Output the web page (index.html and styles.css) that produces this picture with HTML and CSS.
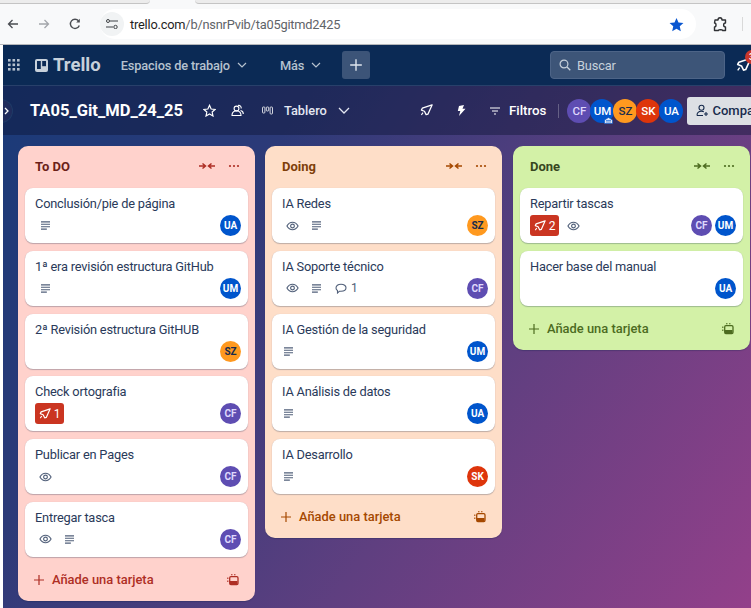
FILE: index.html
```html
<!DOCTYPE html>
<html lang="es">
<head>
<meta charset="utf-8">
<title>TA05_Git_MD_24_25 | Trello</title>
<link rel="stylesheet" href="styles.css">
</head>
<body>
<svg class="defs" width="0" height="0" aria-hidden="true">
  <symbol id="i-desc" viewBox="0 0 12 10"><path d="M1 1h10M1 3.700h10M1 6.300h10M1 9h6.500" fill="none" stroke="currentColor" stroke-width="1.200"/></symbol>
  <symbol id="i-eye" viewBox="0 0 14 10"><path d="M1 5c1.500-2.600 3.500-4 6-4s4.500 1.400 6 4c-1.500 2.600-3.500 4-6 4S2.500 7.600 1 5z" fill="none" stroke="currentColor" stroke-width="1.200"/><circle cx="7" cy="5" r="2" fill="none" stroke="currentColor" stroke-width="1.200"/></symbol>
  <symbol id="i-collapse" viewBox="0 0 16 8"><path d="M0 4h6M3.500 1.500 6.500 4 3.500 6.500M16 4h-6M12.500 1.500 9.500 4l3 2.500" fill="none" stroke="currentColor" stroke-width="1.500"/></symbol>
  <symbol id="i-dots" viewBox="0 0 12 4"><circle cx="2" cy="2" r="1.100" fill="currentColor"/><circle cx="6" cy="2" r="1.100" fill="currentColor"/><circle cx="10" cy="2" r="1.100" fill="currentColor"/></symbol>
  <symbol id="i-plus" viewBox="0 0 12 12"><path d="M6 1v10M1 6h10" fill="none" stroke="currentColor" stroke-width="1.200"/></symbol>
  <symbol id="i-tpl" viewBox="0 0 12 12"><rect x="2.700" y="2.700" width="8.300" height="7.800" rx="1.200" fill="none" stroke="currentColor" stroke-width="1.300"/><path d="M3 7h7.500v3.500H3z" fill="currentColor"/><path d="M.8 3.500v1.500M.8 6.500v1.500M4 .8h1.500M7 .8h1.500" fill="none" stroke="currentColor" stroke-width="1.100"/></symbol>
  <symbol id="i-pin" viewBox="0 0 14 14"><path d="M13 1 2.500 4.500 1.500 6.500 4.800 7.800 6.600 11.500 8.500 11z" fill="none" stroke="currentColor" stroke-width="1.400" stroke-linejoin="round"/><path d="M3.200 9.300 1.500 11.800" stroke="currentColor" stroke-width="1.200"/></symbol>
</svg>

<div class="tabstrip"><span class="tab-side left"></span><span class="tab-gap"></span><span class="tab-side right"></span></div>
<div class="toolbar">
  <svg class="tb-icon" width="12" height="12" viewBox="0 0 12 12"><path d="M11 6H1.500M5.500 2 1.500 6l4 4" fill="none" stroke="#4a4d52" stroke-width="1.300"/></svg>
  <svg class="tb-icon" width="12" height="12" viewBox="0 0 12 12"><path d="M1 6h9.500M6.500 2l4 4-4 4" fill="none" stroke="#a3a6aa" stroke-width="1.300"/></svg>
  <svg class="tb-icon" width="12" height="12" viewBox="0 0 12 12"><path d="M10.300 7.500A4.600 4.600 0 1 1 9.500 2.800" fill="none" stroke="#4a4d52" stroke-width="1.400"/><path d="M10.800 .8v3.600H7.200z" fill="#4a4d52"/></svg>
  <div class="omnibox">
    <span class="site-chip"><svg width="12" height="10" viewBox="0 0 12 10"><path d="M4 2h8M0 8h7" stroke="#3f4246" stroke-width="1.200" fill="none"/><circle cx="2" cy="2" r="1.500" fill="none" stroke="#3f4246"/><circle cx="9.500" cy="8" r="1.700" fill="none" stroke="#3f4246"/></svg></span>
    <span class="url"><b>trello.com</b>/b/nsnrPvib/ta05gitmd2425</span>
    <svg class="star" width="15" height="15" viewBox="0 0 24 24"><path d="M12 1.500l3.200 7.300 7.900.8-5.900 5.300 1.700 7.800L12 18.700l-6.900 4 1.700-7.800L.9 9.600l7.900-.8z" fill="#0b57d0"/></svg>
  </div>
  <svg class="ext" width="16" height="16" viewBox="0 0 16 16"><path d="M3 4h3c0-3 4-3 4 0h3.500v3c-2.500 0-2.500 4 0 4v3.500h-3c0-1-4-1-4 0H2.500V11c2 0 2-4 0-4z" fill="none" stroke="#2f3134" stroke-width="1.400" stroke-linejoin="round"/></svg>
  <span class="tb-sep"></span>
</div>

<div class="app">
  <header class="nav">
    <svg class="grid-ic" width="12" height="12" viewBox="0 0 12 12"><g fill="#b6c2cf"><rect x="0" y="0" width="2.600" height="2.600"/><rect x="4.500" y="0" width="2.600" height="2.600"/><rect x="9" y="0" width="2.600" height="2.600"/><rect x="0" y="4.500" width="2.600" height="2.600"/><rect x="4.500" y="4.500" width="2.600" height="2.600"/><rect x="9" y="4.500" width="2.600" height="2.600"/><rect x="0" y="9" width="2.600" height="2.600"/><rect x="4.500" y="9" width="2.600" height="2.600"/><rect x="9" y="9" width="2.600" height="2.600"/></g></svg>
    <span class="logo"><svg width="13" height="13" viewBox="0 0 13 13"><rect width="13" height="13" rx="2" fill="#c7d1db"/><rect x="2" y="2" width="3.800" height="8" fill="#0b2a55"/><rect x="7.200" y="2" width="3.800" height="5.200" fill="#0b2a55"/></svg>Trello</span>
    <span class="nav-item first">Espacios de trabajo <svg class="chev" width="10" height="6" viewBox="0 0 10 6"><path d="M1 1l4 4 4-4" fill="none" stroke="currentColor" stroke-width="1.200"/></svg></span>
    <span class="nav-item second">Más <svg class="chev" width="10" height="6" viewBox="0 0 10 6"><path d="M1 1l4 4 4-4" fill="none" stroke="currentColor" stroke-width="1.200"/></svg></span>
    <span class="create"><svg width="14" height="14"><use href="#i-plus"/></svg></span>
    <span class="search"><svg width="12" height="12" viewBox="0 0 12 12"><circle cx="5" cy="5" r="3.900" fill="none" stroke="#c7d1db" stroke-width="1.200"/><path d="M8 8l3.300 3.300" stroke="#c7d1db" stroke-width="1.300"/></svg>Buscar</span>
    <span class="bell"><svg width="16" height="16" viewBox="0 0 14 14"><use href="#i-pin"/></svg><span class="bell-count">3</span></span>
  </header>

  <main class="board">
    <div class="board-bar">
      <span class="toggle"><svg width="5" height="8" viewBox="0 0 5 8"><path d="M1 1l3 3-3 3" fill="none" stroke="#fff" stroke-width="1.300"/></svg></span>
      <h1 class="board-title">TA05_Git_MD_24_25</h1>
      <svg class="bar-ic star-o" width="13" height="13" viewBox="0 0 24 24"><path d="M12 2.500l3 6.700 7.300.8-5.400 4.900 1.500 7.200-6.400-3.700-6.400 3.700 1.500-7.200L1.700 10l7.300-.8z" fill="none" stroke="#fff" stroke-width="2.200"/></svg>
      <svg class="bar-ic people" width="13" height="13" viewBox="0 0 13 13"><circle cx="5.500" cy="4.500" r="2.400" fill="none" stroke="#fff" stroke-width="1.100"/><path d="M7 1.500c2-.5 3.500 1 3.200 3M1 11.500c0-2.600 1.300-4 3-4.500h3c1.700.5 3 1.900 3 4.500zM9.500 6.500c1.600.3 2.800 1.600 2.800 3.500" fill="none" stroke="#fff" stroke-width="1.100"/></svg>
      <span class="view"><svg width="11" height="9" viewBox="0 0 11 9"><rect x=".5" y="1" width="2.400" height="6" rx=".8" fill="none" stroke="#fff" stroke-width=".8"/><rect x="4.300" y="1" width="2.400" height="4" rx=".8" fill="none" stroke="#fff" stroke-width=".8"/><rect x="8.100" y="1" width="2.400" height="7" rx=".8" fill="none" stroke="#fff" stroke-width=".8"/></svg>Tablero <svg class="chev wide" width="12" height="7" viewBox="0 0 12 7"><path d="M1 1l5 5 5-5" fill="none" stroke="currentColor" stroke-width="1.300"/></svg></span>
      <span class="bar-right">
        <svg class="rocket" width="13" height="13" viewBox="0 0 14 14"><use href="#i-pin"/></svg>
        <svg class="bolt" width="9" height="11" viewBox="0 0 9 11"><path d="M7 0 2 1 .8 6h2.500L2 11 8.500 3.800H5.500z" fill="#fff"/></svg>
        <span class="filters"><svg width="10" height="8" viewBox="0 0 10 8"><path d="M0 1h10M2 4h6M4 7h2" stroke="#fff" stroke-width="1.200"/></svg>Filtros</span>
        <span class="bar-sep"></span>
        <span class="members">
          <span class="av purple">CF</span>
          <span class="av blue">UM<svg class="admin" width="9" height="7" viewBox="0 0 9 7"><path d="M.5 3 4.500.5 8.500 3v3.500h-8z" fill="#dfe6f5" stroke="#0055cc" stroke-width=".6"/><path d="M2 3.500h5M2 5h5" stroke="#0055cc" stroke-width=".6"/></svg></span>
          <span class="av orange">SZ</span>
          <span class="av red">SK</span>
          <span class="av blue">UA</span>
        </span>
        <span class="share"><svg width="13" height="13" viewBox="0 0 13 13"><circle cx="5.500" cy="3.800" r="2.500" fill="none" stroke="#172b4d" stroke-width="1.100"/><path d="M1 11.500c0-3 1.800-4.300 4.500-4.300 1 0 1.800.2 2.400.5M1 11.500h6M10 8v4M8 10h4" fill="none" stroke="#172b4d" stroke-width="1.100"/></svg>Compartir</span>
      </span>
    </div>

    <div class="lists">
      <section class="list todo">
        <div class="list-head"><h2>To DO</h2><svg class="collapse" width="16" height="8"><use href="#i-collapse"/></svg><svg class="dots" width="12" height="4"><use href="#i-dots"/></svg></div>
        <article class="card"><p>Conclusión/pie de página</p><div class="meta"><svg class="ic-desc solo" width="11" height="9"><use href="#i-desc"/></svg><span class="av blue">UA</span></div></article>
        <article class="card"><p>1ª era revisión estructura GitHub</p><div class="meta"><svg class="ic-desc solo" width="11" height="9"><use href="#i-desc"/></svg><span class="av blue">UM</span></div></article>
        <article class="card"><p>2ª Revisión estructura GitHUB</p><div class="meta"><span class="av orange">SZ</span></div></article>
        <article class="card"><p>Check ortografia</p><div class="meta"><span class="due"><svg width="12" height="12"><use href="#i-pin"/></svg>1</span><span class="av purple">CF</span></div></article>
        <article class="card"><p>Publicar en Pages</p><div class="meta"><svg class="ic-eye" width="13" height="10"><use href="#i-eye"/></svg><span class="av purple">CF</span></div></article>
        <article class="card"><p>Entregar tasca</p><div class="meta"><svg class="ic-eye" width="13" height="10"><use href="#i-eye"/></svg><svg class="ic-desc" width="11" height="9"><use href="#i-desc"/></svg><span class="av purple">CF</span></div></article>
        <div class="add"><svg width="12" height="12"><use href="#i-plus"/></svg><span>Añade una tarjeta</span><svg class="tpl" width="12" height="12"><use href="#i-tpl"/></svg></div>
      </section>

      <section class="list doing">
        <div class="list-head"><h2>Doing</h2><svg class="collapse" width="16" height="8"><use href="#i-collapse"/></svg><svg class="dots" width="12" height="4"><use href="#i-dots"/></svg></div>
        <article class="card"><p>IA Redes</p><div class="meta"><svg class="ic-eye" width="13" height="10"><use href="#i-eye"/></svg><svg class="ic-desc" width="11" height="9"><use href="#i-desc"/></svg><span class="av orange">SZ</span></div></article>
        <article class="card"><p>IA Soporte técnico</p><div class="meta"><svg class="ic-eye" width="13" height="10"><use href="#i-eye"/></svg><svg class="ic-desc" width="11" height="9"><use href="#i-desc"/></svg><span class="comments"><svg width="12" height="11" viewBox="0 0 12 11"><path d="M1 5c0-2.300 2-3.800 5-3.800s5 1.500 5 3.500-2 3.500-5 3.500H4.500L2.500 10V7.500C1.500 7 1 6 1 5z" fill="none" stroke="currentColor" stroke-width="1.100"/></svg>1</span><span class="av purple">CF</span></div></article>
        <article class="card"><p>IA Gestión de la seguridad</p><div class="meta"><svg class="ic-desc" width="11" height="9"><use href="#i-desc"/></svg><span class="av blue">UM</span></div></article>
        <article class="card"><p>IA Análisis de datos</p><div class="meta"><svg class="ic-desc" width="11" height="9"><use href="#i-desc"/></svg><span class="av blue">UA</span></div></article>
        <article class="card"><p>IA Desarrollo</p><div class="meta"><svg class="ic-desc" width="11" height="9"><use href="#i-desc"/></svg><span class="av red">SK</span></div></article>
        <div class="add"><svg width="12" height="12"><use href="#i-plus"/></svg><span>Añade una tarjeta</span><svg class="tpl" width="12" height="12"><use href="#i-tpl"/></svg></div>
      </section>

      <section class="list done">
        <div class="list-head"><h2>Done</h2><svg class="collapse" width="16" height="8"><use href="#i-collapse"/></svg><svg class="dots" width="12" height="4"><use href="#i-dots"/></svg></div>
        <article class="card"><p>Repartir tascas</p><div class="meta"><span class="due"><svg width="12" height="12"><use href="#i-pin"/></svg>2</span><svg class="ic-eye after-due" width="13" height="10"><use href="#i-eye"/></svg><span class="av purple">CF</span><span class="av blue next">UM</span></div></article>
        <article class="card"><p>Hacer base del manual</p><div class="meta"><span class="av blue">UA</span></div></article>
        <div class="add"><svg width="12" height="12"><use href="#i-plus"/></svg><span>Añade una tarjeta</span><svg class="tpl" width="12" height="12"><use href="#i-tpl"/></svg></div>
      </section>
    </div>
  </main>
</div>
</body>
</html>
```
FILE: styles.css
```css
* { box-sizing: border-box; }
html, body { margin: 0; height: 100%; }
body {
  width: 751px;
  height: 608px;
  overflow: hidden;
  background: #fff;
  font-family: Roboto, "Noto Sans", sans-serif;
  display: flex;
  flex-direction: column;
}
.defs { position: absolute; }
h1, h2, p { margin: 0; }

.tabstrip { height: 4px; background: #f8f9fa; flex: none; display: flex; }
.tab-side { display: block; height: 4px; background: #ececec; border-bottom: 1px solid #c4c4c4; }
.tab-side.left { width: 150px; border-bottom-right-radius: 6px; }
.tab-side.right { flex: 1; border-bottom-left-radius: 6px; }
.tab-gap { width: 45px; }
.toolbar {
  height: 41px;
  flex: none;
  background: #f8f9fa;
  display: flex;
  align-items: center;
  padding: 0 0 0 7px;
  border-bottom: 1px solid #b5b7ba;
}
.tb-icon { margin-right: 19px; flex: none; }
.omnibox {
  width: 596px;
  height: 30px;
  background: #fff;
  border-radius: 15px;
  display: flex;
  align-items: center;
  font-size: 12.800px;
  letter-spacing: -.2px;
  color: #5f6368;
  flex: none;
}
.site-chip {
  width: 24px; height: 24px; border-radius: 50%; background: #f1f3f4;
  margin-right: 6px;
  display: flex; align-items: center; justify-content: center;
}
.url b { font-weight: 400; color: #1f1f1f; }
.star { margin-left: auto; margin-right: 12px; }
.ext { margin-left: 16px; flex: none; }
.tb-sep { width: 1px; height: 14px; background: #d9d9d9; margin-left: 14px; }

.app { flex: 1; margin-left: 3px; display: flex; flex-direction: column; min-height: 0; background: #fff; }
.nav {
  height: 41px;
  flex: none;
  background: #0b2a55;
  border-bottom: 1px solid #28406a;
  color: #b6c2cf;
  display: flex;
  align-items: center;
  padding-left: 5px;
  font-size: 12.800px;
  letter-spacing: -.15px;
  font-weight: 500;
}
.logo {
  display: flex; align-items: center; gap: 5px;
  color: #c7d1db; font-weight: 700; font-size: 18.500px; letter-spacing: 0;
  margin-left: 15px;
}
.nav-item { display: inline-flex; align-items: center; gap: 7px; }
.nav-item.first { margin-left: 20px; }
.nav-item.second { margin-left: 33px; }
.chev { flex: none; }
.create {
  width: 28px; height: 28px; border-radius: 3px; background: #3c5478; color: #dfe6ee;
  display: flex; align-items: center; justify-content: center; margin-left: 21px;
}
.search {
  width: 175px; height: 28px; margin-left: auto; margin-right: 8px;
  background: #3d5578; border: 1px solid #4d6487; border-radius: 4px;
  display: flex; align-items: center; gap: 6px; padding-left: 8px;
  color: #c7d1db; font-weight: 400;
}
.bell { position: relative; width: 22px; height: 20px; color: #fff; display: flex; align-items: center; margin-left: 3px; margin-right: -7px; }
.bell-count {
  position: absolute; left: 9px; top: -5px; width: 14px; height: 14px; border-radius: 50%;
  background: #c9372c; color: #fff; font-size: 9px; line-height: 14px; padding-left: 4px;
}

.board {
  flex: 1; min-height: 0;
  background: linear-gradient(125deg, #1a3a78 0%, #2c3a78 28%, #5f3f80 62%, #93408a 100%);
  display: flex; flex-direction: column;
  position: relative;
}
.board-bar {
  height: 49px; flex: none;
  background: rgba(12, 18, 50, .42);
  display: flex; align-items: center;
  color: #fff;
  font-size: 12.800px;
  white-space: nowrap;
  overflow: hidden;
}
.toggle {
  width: 16px; height: 24px; margin-left: -6px; margin-right: 17px;
  border: 1px solid #1e3a66; border-left: 0; border-radius: 0 12px 12px 0;
  background: #202c5c;
  display: flex; align-items: center; justify-content: flex-end; padding-right: 3px; flex: none;
}
.board-title { font-size: 16.500px; font-weight: 700; color: #fff; }
.star-o { margin-left: 20px; flex: none; }
.people { margin-left: 15px; flex: none; }
.view { display: inline-flex; align-items: center; gap: 7px; margin-left: 18px; font-weight: 500; color: #e4e7f2; }
.view svg:first-child { margin-right: 4px; }
.chev.wide { margin-left: 4px; }
.bar-right { margin-left: auto; display: inline-flex; align-items: center; color: #fff; width: 331px; flex: none; }
.rocket { flex: none; }
.bolt { margin-left: 24px; flex: none; }
.filters { display: inline-flex; align-items: center; gap: 9px; margin-left: 24px; font-weight: 500; font-size: 13.300px; }
.bar-sep { width: 1px; height: 14px; background: rgba(255,255,255,.25); margin-left: 12px; margin-right: 8px; }
.members { display: inline-flex; }
.members .av { margin-left: -1px; width: 24px; height: 24px; flex: none; font-size: 11.500px; font-weight: 500; }
.members .av:first-child { margin-left: 0; }
.av {
  width: 21px; height: 21px; border-radius: 50%;
  display: inline-flex; align-items: center; justify-content: center;
  font-size: 10px; font-weight: 700; color: #fff;
  position: relative; flex: none;
}
.blue { background: #0055cc; }
.purple { background: #5e4db2; color: #dfd8fd; }
.orange { background: #ff991f; color: #172b4d; }
.red { background: #de350b; }
.admin { position: absolute; right: 1px; bottom: -1px; }
.share {
  margin-left: 4px; flex: 1; min-width: 0; height: 28px;
  background: #dcdfe4; color: #172b4d; border-radius: 3px 0 0 3px;
  display: inline-flex; align-items: center; gap: 3px; padding-left: 9px;
  font-weight: 500; font-size: 13px; overflow: hidden;
}
.share svg { flex: none; }

.lists {
  flex: 1; min-height: 0;
  display: flex; align-items: flex-start; gap: 10px;
  padding: 11px 0 0 15px;
}
.list {
  width: 237px; flex: none;
  border-radius: 10px;
  padding: 0 7px 6px;
  box-shadow: 0 1px 1px rgba(9,30,66,.25);
}
.list + .list + .list { margin-left: 1px; }
.todo { background: #ffd2cc; --head: #6b1f18; --act: #ae2e24; }
.doing { background: #fedec8; --head: #7f3f0a; --act: #a54800; }
.done { background: #d3f1a7; --head: #37471f; --act: #4c6b1f; }
.list-head {
  height: 42px;
  display: flex; align-items: center;
  padding: 0 8px 2px 10px;
  color: var(--act);
}
.list-head h2 { font-size: 13px; font-weight: 700; color: var(--head); margin-right: auto; }
.dots { margin-left: 13px; }
.card {
  height: 55px;
  background: #fff;
  border-radius: 8px;
  box-shadow: 0 1px 1px rgba(9,30,66,.25), 0 0 1px rgba(9,30,66,.15);
  padding: 7px 7px 0 10px;
  margin-bottom: 7.800px;
}
.card p { font-size: 12.800px; letter-spacing: -.2px; line-height: 17px; color: #2a3a5a; white-space: nowrap; }
.meta {
  display: flex; align-items: center; height: 21px; margin-top: 3px;
  color: #505f79;
}
.meta .av { margin-left: auto; }
.meta .av.next { margin-left: 3px; }
.ic-eye { margin-left: 4px; flex: none; }
.ic-desc { margin-left: 1px; flex: none; }
.ic-desc.solo { margin-left: 5px; }
.ic-eye + .ic-desc { margin-left: 12px; }
.after-due { margin-left: 8px; }
.due {
  width: 29px; height: 21px; border-radius: 3px; background: #ca3521; color: #fff;
  display: inline-flex; align-items: center; justify-content: center; gap: 3px; font-size: 12px;
}
.comments { display: inline-flex; align-items: center; gap: 4px; margin-left: 13px; font-size: 12px; }
.add {
  height: 30px;
  display: flex; align-items: center; gap: 7px;
  padding: 0 9px 0 8px;
  font-size: 12.900px; font-weight: 500;
  color: var(--act);
}
.add span { flex: 1; }
.tpl { flex: none; }
```
